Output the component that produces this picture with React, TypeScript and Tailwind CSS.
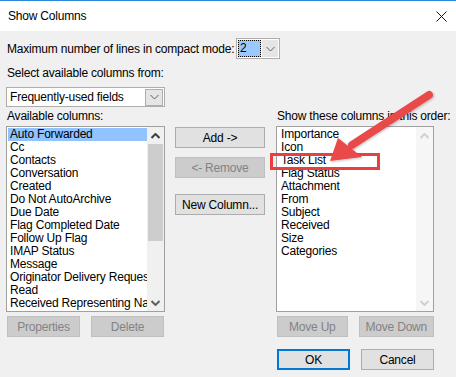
import React from 'react';

const available = [
  'Auto Forwarded',
  'Cc',
  'Contacts',
  'Conversation',
  'Created',
  'Do Not AutoArchive',
  'Due Date',
  'Flag Completed Date',
  'Follow Up Flag',
  'IMAP Status',
  'Message',
  'Originator Delivery Requested',
  'Read',
  'Received Representing Name',
];

const shown = [
  'Importance',
  'Icon',
  'Task List',
  'Flag Status',
  'Attachment',
  'From',
  'Subject',
  'Received',
  'Size',
  'Categories',
];

// Chevron for combo buttons and scroll arrows
const Chevron = ({ up = false, color = '#606060', bold = false }: { up?: boolean; color?: string; bold?: boolean }) => (
  <svg width="9" height="6" viewBox="0 0 9 6">
    <path
      d={up ? 'M0.5 5 L4.5 1 L8.5 5' : 'M0.5 1 L4.5 5 L8.5 1'}
      fill="none"
      stroke={color}
      strokeWidth={bold ? 2 : 1}
    />
  </svg>
);

const Btn = ({ label, disabled = false, w = 'w-[73px]', focus = false }: { label: string; disabled?: boolean; w?: string; focus?: boolean }) => (
  <div
    className={
      'h-[21px] flex items-center justify-center text-[12px] whitespace-nowrap ' +
      w +
      (disabled
        ? ' bg-[#cccccc] border border-[#bfbfbf] text-[#838383]'
        : focus
        ? ' bg-[#e1e1e1] border-2 border-[#0078d7] text-black'
        : ' bg-[#e1e1e1] border border-[#adadad] text-black')
    }
  >
    {label}
  </div>
);

export default function App() {
  return (
    <div
      className="relative w-[456px] h-[377px] bg-[#f0f0f0] overflow-hidden text-[12px] tracking-[-0.2px] text-black"
      style={{ fontFamily: '"Liberation Sans", Arial, sans-serif' }}
    >
      {/* title bar */}
      <div className="h-[31px] bg-white border-t border-[#2b88d8] flex items-center justify-between pl-[8px] pr-[9px]">
        <span className="text-[12px]">Show Columns</span>
        <svg width="11" height="11" viewBox="0 0 11 11">
          <path d="M0.5 0.5 L10.5 10.5 M10.5 0.5 L0.5 10.5" stroke="#111" strokeWidth="1" />
        </svg>
      </div>

      <div className="pl-[6px]">
        {/* compact mode */}
        <div className="mt-[7px] h-[21px] flex items-center">
          <span className="w-[230px] pl-[1px] whitespace-nowrap">Maximum number of lines in compact mode:</span>
          <div className="w-[44px] h-[21px] border border-[#adadad] bg-white flex items-center p-[1px]">
            <div className="w-[23px] h-[17px] bg-[#99c9ff] border border-dotted border-black leading-[15px] pl-[1px]">2</div>
            <div className="ml-[1px] flex-1 h-[17px] bg-[#e5e5e5] flex items-center justify-center">
              <Chevron />
            </div>
          </div>
        </div>

        <div className="mt-[6px] h-[16px] leading-[16px] pl-[1px] whitespace-nowrap">Select available columns from:</div>

        <div className="mt-[6px] w-[159px] h-[20px] border border-[#adadad] bg-white flex items-center">
          <span className="pl-[3px] flex-1 whitespace-nowrap">Frequently-used fields</span>
          <div className="w-[18px] h-[17px] mr-[1px] bg-[#e5e5e5] border border-[#adadad] flex items-center justify-center">
            <Chevron />
          </div>
        </div>

        {/* columns */}
        <div className="grid grid-cols-[159px_90px_159px] gap-x-[10px]">
          <div className="h-[19px] leading-[19px] pl-[1px] whitespace-nowrap">Available columns:</div>
          <div />
          <div className="h-[19px] leading-[19px] pl-[1px] ml-[1px] whitespace-nowrap">Show these columns in this order:</div>

          {/* available list */}
          <div className="h-[186px] border border-[#a0a0a0] bg-white flex">
            <div className="flex-1 min-w-0 pl-[1px] pt-[1px] overflow-hidden">
              {available.map((c, i) => (
                <div
                  key={c}
                  className={'h-[13px] leading-[13px] pl-[2px] whitespace-nowrap overflow-hidden ' + (i === 0 ? 'bg-[#91c3ff]' : '')}
                >
                  {c}
                </div>
              ))}
            </div>
            <div className="w-[17px] flex flex-col bg-[#f0f0f0]">
              <div className="h-[17px] flex items-center justify-center">
                <Chevron up bold color="#404040" />
              </div>
              <div className="h-[97px] mx-[1px] bg-[#cdcdcd]" />
              <div className="flex-1" />
              <div className="h-[17px] flex items-center justify-center">
                <Chevron bold color="#606060" />
              </div>
            </div>
          </div>

          {/* middle buttons */}
          <div className="flex flex-col">
            <div className="mt-[1px]">
              <Btn label="Add ->" w="w-[90px]" />
            </div>
            <div className="mt-[9px]">
              <Btn label="<- Remove" w="w-[90px]" disabled />
            </div>
            <div className="mt-[16px]">
              <Btn label="New Column..." w="w-[90px]" />
            </div>
          </div>

          {/* shown list */}
          <div className="ml-[1px] h-[186px] border border-[#a0a0a0] bg-white flex">
            <div className="flex-1 min-w-0 pl-[1px] pt-[1px] overflow-hidden">
              {shown.map((c) => (
                <div key={c} className="h-[13px] leading-[13px] pl-[3px] whitespace-nowrap">
                  {c}
                </div>
              ))}
            </div>
            <div className="w-[17px] flex flex-col justify-between bg-[#f6f6f6]">
              <div className="h-[17px] flex items-center justify-center">
                <Chevron up bold color="#d0d0d0" />
              </div>
              <div className="h-[17px] flex items-center justify-center">
                <Chevron bold color="#d0d0d0" />
              </div>
            </div>
          </div>

          {/* list buttons */}
          <div className="mt-[4px] pl-[1px] flex gap-[11px]">
            <Btn label="Properties" disabled />
            <Btn label="Delete" disabled />
          </div>
          <div />
          <div className="mt-[4px] pl-[1px] ml-[1px] flex gap-[11px]">
            <Btn label="Move Up" disabled />
            <Btn label="Move Down" disabled w="w-[78px]" />
          </div>

          <div />
          <div />
          <div className="mt-[12px] pl-[1px] ml-[1px] flex gap-[11px]">
            <Btn label="OK" focus />
            <Btn label="Cancel" />
          </div>
        </div>
      </div>

      {/* annotation: red box + arrow */}
      <div className="absolute left-[270px] top-[153px] w-[110px] h-[17px] border-[3px] border-[#e8403f]" />
      <svg className="absolute left-0 top-0" width="456" height="377" viewBox="0 0 456 377">
        <defs>
          <filter id="sh" x="-20%" y="-20%" width="140%" height="140%">
            <feDropShadow dx="1" dy="1" stdDeviation="1" floodColor="#000" floodOpacity="0.25" />
          </filter>
        </defs>
        <g filter="url(#sh)">
          <line x1="429" y1="95" x2="352" y2="145" stroke="#e8484a" strokeWidth="8" strokeLinecap="round" />
          <polygon points="330,161 338,138 362,157" fill="#e8484a" />
        </g>
      </svg>
    </div>
  );
}
